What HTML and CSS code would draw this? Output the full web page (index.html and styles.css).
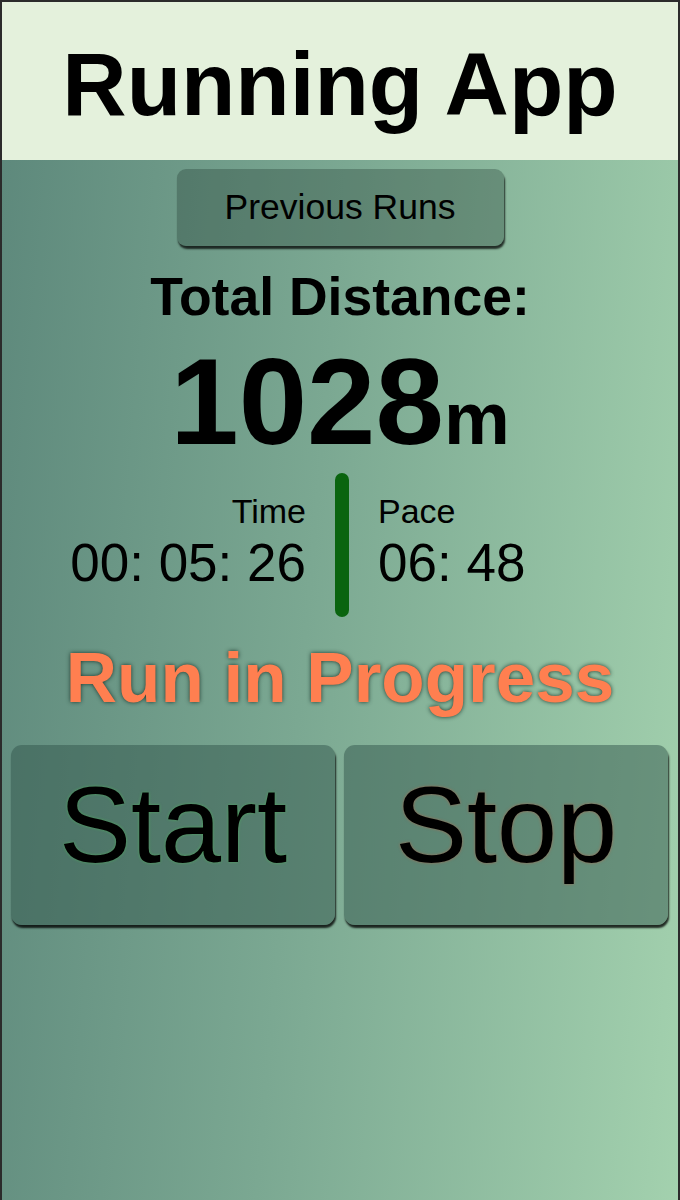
FILE: index.html
```html
<!DOCTYPE html>
<html lang="en">
<head>
<meta charset="utf-8">
<title>Running App</title>
<link rel="stylesheet" href="styles.css">
</head>
<body>
<div class="frame">
  <header class="app-header">Running App</header>
  <main class="app-main">
    <button class="prev-btn">Previous Runs</button>
    <div class="total-label">Total Distance:</div>
    <div class="total-value">1028<span class="unit">m</span></div>
    <div class="stats">
      <div class="stat stat-left">
        <div class="stat-label">Time</div>
        <div class="stat-value">00: 05: 26</div>
      </div>
      <div class="divider"></div>
      <div class="stat stat-right">
        <div class="stat-label">Pace</div>
        <div class="stat-value">06: 48</div>
      </div>
    </div>
    <div class="status">Run in Progress</div>
    <div class="controls">
      <button class="ctrl ctrl-start">Start</button>
      <button class="ctrl ctrl-stop">Stop</button>
    </div>
  </main>
</div>
</body>
</html>
```
FILE: styles.css
```css
html, body {
  margin: 0;
  padding: 0;
  background: #2b2b2b;
}
body {
  font-family: "Liberation Sans", Arial, Helvetica, sans-serif;
  color: #000;
}
.frame {
  box-sizing: border-box;
  min-height: 1200px;
  border: 2px solid #2b2b2b;
  border-bottom: none;
  display: flex;
  flex-direction: column;
}
.app-header {
  box-sizing: border-box;
  height: 158px;
  padding-top: 6px;
  line-height: 152px;
  background: #e4f1dc;
  text-align: center;
  font-weight: bold;
  font-size: 89px;
}
.app-main {
  flex: 1;
  background: linear-gradient(95deg, #5e897c 0%, #7ba892 45%, #a3d1ae 100%);
  display: flex;
  flex-direction: column;
  align-items: center;
  padding-bottom: 40px;
}
.prev-btn {
  margin-top: 9px;
  width: 327px;
  height: 77px;
  border: none;
  border-radius: 9px;
  background: rgba(30, 55, 48, 0.32);
  box-shadow: 1px 3px 2px rgba(0, 0, 0, 0.75);
  font-family: inherit;
  font-size: 35.5px;
  line-height: 77px;
  padding: 0;
  color: #000;
}
.total-label {
  margin-top: 21px;
  font-weight: bold;
  font-size: 53.5px;
  line-height: 60px;
}
.total-value {
  margin-top: 12px;
  font-weight: bold;
  font-size: 123px;
  line-height: 125px;
}
.unit {
  font-size: 74px;
  line-height: 0;
}
.stats {
  box-sizing: border-box;
  margin-top: 9px;
  width: 100%;
  padding-left: 4px;
  display: grid;
  grid-template-columns: 1fr auto 1fr;
  column-gap: 29px;
}
.stat {
  padding-top: 18px;
}
.stat-left {
  text-align: right;
}
.stat-right {
  text-align: left;
}
.stat-label {
  font-size: 34px;
  line-height: 40px;
}
.stat-value {
  font-size: 53px;
  line-height: 64px;
}
.divider {
  width: 14px;
  height: 144px;
  border-radius: 7px;
  background: #0a640f;
}
.status {
  margin-top: 21px;
  font-weight: bold;
  font-size: 71px;
  line-height: 80px;
  color: #ff7f50;
  text-shadow: 0 0 4px rgba(20, 45, 35, 0.9);
}
.controls {
  box-sizing: border-box;
  margin-top: 27px;
  width: 100%;
  padding: 0 10px 0 9px;
  display: grid;
  grid-template-columns: 1fr 1fr;
  column-gap: 9px;
}
.ctrl {
  box-sizing: border-box;
  height: 180px;
  padding: 26px 0 0;
  border: none;
  border-radius: 11px;
  background: rgba(50, 85, 75, 0.5);
  box-shadow: 1px 3px 2px rgba(0, 0, 0, 0.8);
  font-family: inherit;
  font-size: 108px;
  line-height: 108px;
  color: #000;
  display: flex;
  justify-content: center;
  align-items: flex-start;
}
.ctrl-start {
  text-shadow: 0 0 3px rgba(80, 200, 90, 0.6);
}
.ctrl-stop {
  text-shadow: 0 0 3px rgba(200, 90, 60, 0.6);
}
```
